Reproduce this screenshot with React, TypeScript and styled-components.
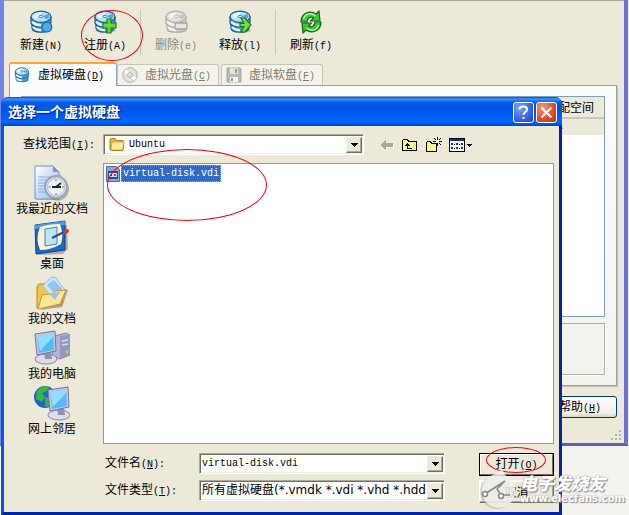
import React, { useState } from "react";
import styled, { createGlobalStyle, css } from "styled-components";

const cjk = `"Noto Sans CJK SC", sans-serif`;
const face = "#ece9d8";

const Global = createGlobalStyle`
  * { box-sizing: border-box; }
  body { margin: 0; background: #f4f3ee; }
  button, input, select { font: inherit; color: inherit; margin: 0; border-radius: 0; }
  svg { display: block; flex: none; }
`;

const Desktop = styled.main`
  position: relative;
  min-height: 515px;
  padding-right: 1px;
  overflow: hidden;
  font: 12px/14px ${cjk};
  color: #000;
`;

/* ---------- text ---------- */
const Latin = styled.span`
  font: 10px/14px "Liberation Mono", monospace;
  white-space: pre;
`;

function Caption({ text, hotkey, underline = true, tail = "" }: {
  text: string; hotkey: string; underline?: boolean; tail?: string;
}) {
  return (
    <span>
      {text}
      <Latin>({underline ? <u>{hotkey}</u> : hotkey}){tail}</Latin>
    </span>
  );
}

const Ring = styled.span<{ $w: number; $h: number; $x: number; $y: number }>`
  position: absolute;
  left: ${p => p.$x}px;
  top: ${p => p.$y}px;
  width: ${p => p.$w}px;
  height: ${p => p.$h}px;
  border: 1px solid #f00010;
  border-radius: 50%;
  pointer-events: none;
  z-index: 2;
`;

/* ---------- media manager window ---------- */
const Manager = styled.section`
  display: flex;
  flex-direction: column;
  border: solid #6f7fe0;
  border-color: #6f7fe0 #6a74d8 #5a5fc8 #7384e4;
  border-width: 0 4px 3px 4px;
  background: ${face};
  box-shadow: inset 0 2px 0 -1px #aca899;
`;

const Toolbar = styled.nav`
  display: flex;
  align-items: flex-start;
  padding: 10px 5px 7px;
`;

const Tool = styled.button`
  position: relative;
  width: 64px;
  height: 45px;
  padding: 0;
  border: 0;
  background: none;
  display: flex;
  flex-direction: column;
  align-items: center;
  gap: 3px;
  white-space: nowrap;
  &:disabled { color: #8b897c; }
`;

const Separator = styled.span`
  width: 1px;
  height: 45px;
  margin: 0 3px;
  background: #c9c6b4;
`;

const TabStrip = styled.div`
  display: flex;
  align-items: flex-end;
  gap: 2px;
  padding-left: 5px;
`;

const Tab = styled.button<{ $active?: boolean }>`
  display: flex;
  align-items: center;
  width: 102px;
  height: 21px;
  padding: 0 0 0 4px;
  gap: 7px;
  white-space: nowrap;
  color: #7d7b70;
  background: #f4f3ea;
  border: 1px solid #c5c4b4;
  border-bottom: 0;
  border-radius: 3px 3px 0 0;
  ${p => p.$active && css`
    width: 108px;
    height: 24px;
    margin: 0 -2px -1px 0;
    gap: 8px;
    color: #000;
    background: #fcfcfe;
    border-color: #91a7b4;
    border-top: 2px solid #fba62c;
    z-index: 1;
  `}
`;

const TabPanel = styled.div`
  margin: 0 7px 0 5px;
  padding: 10px 11px;
  border: 1px solid #91a0a5;
  background: linear-gradient(#fcfcfe, #f4f3ee);
  box-shadow: 1px 1px 1px #c9c6b8;
`;

const Media = styled.table`
  width: 100%;
  height: 221px;
  border: 1px solid #7f9db9;
  border-collapse: separate;
  border-spacing: 0;
  background: #fff;
  th, td { padding: 0; text-align: right; }
  th {
    height: 22px;
    padding-right: 10px;
    font-weight: 400;
    background: #ebeadb;
    border-bottom: 2px solid #cbc7b8;
  }
  td { height: 13px; padding-right: 41px; background: #ece9d8; line-height: 12px; }
  tr:last-child td { height: auto; background: #fff; }
`;

const Details = styled.div`
  height: 52px;
  margin-top: 6px;
  border: 1px solid #b5b1a2;
  background: #f3f2ec;
  box-shadow: 1px 1px 0 #fff;
`;

const Footer = styled.footer`
  display: flex;
  justify-content: flex-end;
  align-items: flex-end;
  padding: 10px 0 0;
`;

const HelpButton = styled.button`
  width: 76px;
  height: 22px;
  margin: 0 -7px 25px 0;
  padding: 0 0 0 2px;
  background: linear-gradient(#fff, #f0efe8 80%, #d9d3c6);
  border: 1px solid #003c74;
  border-radius: 3px;
`;

/* ---------- open-file dialog ---------- */
const Dialog = styled.section`
  position: absolute;
  top: 97px;
  left: 1px;
  right: 67px;
  border: 3px solid #0a41d8;
  border-top: 0;
  border-color: #0a41d8 #0424a8 #0424a8 #0855e0;
  border-radius: 7px 7px 0 0;
  background: ${face};
`;

const TitleBar = styled.header`
  display: flex;
  align-items: center;
  justify-content: flex-end;
  gap: 2px;
  height: 29px;
  margin: 0 -3px;
  padding: 2px 5px 0 7px;
  border-radius: 7px 7px 0 0;
  background: linear-gradient(#0848c0 0, #3d95ff 2px, #0a62ee 5px, #0054e3 9px, #0058ee 17px, #0068ff 24px, #0058e6 27px, #0043c4);
  h1 {
    flex: 1;
    margin: 0;
    padding-bottom: 3px;
    font: bold 14px/20px ${cjk};
    color: #fff;
    text-shadow: 1px 1px 1px #0a1883;
  }
`;

const TitleButton = styled.button<{ $close?: boolean }>`
  width: 21px;
  height: 21px;
  padding: 0;
  border: 1px solid #fff;
  border-radius: 3px;
  color: #fff;
  background: ${p => p.$close
    ? "radial-gradient(circle at 30% 25%, #f09a80, #e0502c 55%, #b83010)"
    : "radial-gradient(circle at 30% 25%, #7ea3f8, #3a68e8 55%, #1d45c0)"};
  display: grid;
  place-items: center;
`;

const Body = styled.div`
  display: grid;
  grid-template-columns: 99px minmax(0, 1fr);
  padding: 8px 5px 9px 0;
`;

const LookLabel = styled.label`
  padding: 2px 0 0 19px;
  white-space: nowrap;
`;

const LookRow = styled.div`
  display: flex;
  align-items: flex-start;
  height: 29px;
`;

const Field = styled.div`
  display: flex;
  align-items: center;
  position: relative;
  flex: 1;
  min-width: 0;
  height: 21px;
  background: #fff;
  border: 1px solid;
  border-color: #aca899 #fff #fff #aca899;
  box-shadow: inset 1px 1px 0 #716f64, inset -1px -1px 0 #f1efe2;
  input, select {
    flex: 1;
    min-width: 0;
    height: 17px;
    padding: 0 20px 0 2px;
    border: 0;
    outline: 0;
    background: none;
    appearance: none;
  }
`;

const LatinInput = styled.input`
  && { font: 10px/14px "Liberation Mono", monospace; }
`;
const LatinSelect = styled.select`
  && { font: 10px/14px "Liberation Mono", monospace; padding-left: 25px; }
`;
const TypeSelect = styled.select`
  && { font: 12px/17px "DejaVu Sans", ${cjk}; padding-right: 17px; }
`;

const DropMark = styled.span`
  position: absolute;
  top: 2px;
  right: 1px;
  width: 16px;
  height: 16px;
  display: grid;
  place-items: center;
  background: ${face};
  border: 1px solid;
  border-color: #f1efe2 #716f64 #716f64 #f1efe2;
  box-shadow: inset -1px -1px 0 #aca899;
  pointer-events: none;
`;

const FieldIcon = styled.span`
  position: absolute;
  left: 5px;
  pointer-events: none;
`;

const IconBar = styled.div`
  display: flex;
  gap: 7px;
  padding: 3px 0 0 16px;
  width: 190px;
`;

const IconButton = styled.button`
  padding: 0;
  border: 0;
  background: none;
`;

const Places = styled.nav`
  display: flex;
  flex-direction: column;
  gap: 5px;
  padding: 2px 3px 0 0;
`;

const Place = styled.button`
  display: flex;
  flex-direction: column;
  align-items: center;
  padding: 0;
  border: 0;
  background: none;
  white-space: nowrap;
  line-height: 14px;
`;

const Files = styled.ul`
  position: relative;
  min-height: 281px;
  margin: 0;
  padding: 1px 2px;
  list-style: none;
  background: #fff;
  border: 1px solid #7f9db9;
`;

const FileItem = styled.button`
  display: flex;
  align-items: center;
  gap: 1px;
  height: 17px;
  padding: 0;
  border: 0;
  background: none;
  color: #fff;
`;

const FileName = styled(Latin)`
  line-height: 15px;
  padding: 0 1px;
  background: #316ac5;
  border: 1px dotted #e8a33c;
`;

const Bottom = styled.div`
  grid-column: 2;
  display: flex;
  align-items: flex-start;
  gap: 34px;
  padding: 9px 0 0 2px;
`;

const Fields = styled.div`
  flex: 1;
  min-width: 0;
  display: grid;
  grid-template-columns: 94px minmax(0, 1fr);
  align-items: center;
  row-gap: 6px;
`;

const Actions = styled.div`
  position: relative;
  width: 75px;
  display: flex;
  flex-direction: column;
  gap: 4px;
`;

const Action = styled.button<{ $primary?: boolean }>`
  height: 23px;
  padding: 0;
  background: ${face};
  border: 1px solid;
  border-color: ${p => (p.$primary ? "#000" : "#fff #716f64 #716f64 #fff")};
  box-shadow: inset -1px -1px 0 ${p => (p.$primary ? "#716f64" : "#aca899")}, inset 1px 1px 0 #fff;
`;

/* ---------- site mark ---------- */
const Mark = styled.div`
  position: absolute;
  right: 4px;
  bottom: 6px;
  display: flex;
  align-items: center;
  gap: 5px;
  color: #fff;
  white-space: nowrap;
  pointer-events: none;
  z-index: 3;
  text-shadow: 1px 1px 1px #8a8a8a, 0 0 2px #999;
  strong { display: block; font: italic 900 17px/20px ${cjk}; }
  span { display: block; font: bold 10px/12px "DejaVu Sans", sans-serif; }
`;

/* ---------- icons ---------- */
function DiskIcon({ size = 24, gray, badge }: { size?: number; gray?: boolean; badge?: "dot" | "plus" | "minus" | "arrow" }) {
  const edge = gray ? "#b0aea6" : "#1d5c8c";
  const side = gray ? "#d3d1ca" : "#4a9fd8";
  const lite = gray ? "#f4f3ef" : "#dff5ff";
  const top = gray ? "#e2e0da" : "#b4e2fa";
  return (
    <svg width={size} height={size} viewBox="0 0 24 24">
      <ellipse cx="13" cy="20.500" rx="10" ry="2.500" fill="#8a8878" opacity=".4" />
      <path d="M3 12v6c0 5.500 18 5.500 18 0v-6z" fill={side} stroke={edge} strokeWidth="1.200" />
      <path d="M4 16.500q2 3.500 8 3.700" stroke={lite} strokeWidth="2.400" fill="none" />
      <path d="M2 7v5.500c0 6 20 6 20 0V7z" fill={side} stroke={edge} strokeWidth="1.200" />
      <path d="M3.500 11.500q2 3.500 8.500 3.800" stroke={lite} strokeWidth="2.600" fill="none" />
      <ellipse cx="12" cy="6.800" rx="10" ry="5.600" fill={top} stroke={edge} strokeWidth="1.200" />
      <path d="M4 6.500Q7 2 13 2.200L10.500 6 6 9z" fill={lite} />
      <path d="M14 6l5.500-2q2.500 3-2 5.500z" fill={gray ? "#c9c7c0" : "#4fa6de"} />
      <ellipse cx="12" cy="6.500" rx="2" ry="1.200" fill={lite} stroke={edge} strokeWidth=".7" />
      {badge === "dot" && <circle cx="18" cy="17" r="4.800" fill="#4fabea" stroke="#1c6fae" strokeWidth="1.200" />}
      {badge === "plus" && <path d="M14 9h4v4h5v5h-5v5h-4v-5h-4v-5h4z" fill="#6cd43c" stroke="#1f7a18" strokeWidth="1.200" />}
      {badge === "minus" && <rect x="11" y="13" width="12" height="6" rx="1" fill="#e8e7e2" stroke="#a5a39b" strokeWidth="1.300" />}
      {badge === "arrow" && <path d="M13 8h4l6 7-6 7h-4l3-5.500h-4v-3h4z" fill="#79dc3f" stroke="#1f7a18" strokeWidth="1.200" />}
    </svg>
  );
}

const RefreshIcon = () => (
  <svg width="24" height="24" viewBox="0 0 24 24">
    <g fill="#42c438" stroke="#12661a" strokeWidth="1.200" strokeLinejoin="round">
      <path d="M2 12C2 3 11 0 17 4l3-3 1 10h-9.500l3-3C11.500 6 8 8 8 12z" />
      <path d="M22 12c0 9-9 12-15 8l-3 3-1-10h9.500l-3 3c3 2 6.500 0 6.500-4z" />
    </g>
    <path d="M4.500 9c1.500-6 8-6.500 12-3M19.500 15c-1.500 6-8 6.500-12 3" stroke="#b4f59a" strokeWidth="1.500" fill="none" />
  </svg>
);

const DiscIcon = () => (
  <svg width="16" height="16" viewBox="0 0 16 16">
    <circle cx="8" cy="8" r="7.300" fill="#e3e2de" stroke="#b3b1aa" />
    <path d="M8 8 3 3.500M8 8l5 4.500" stroke="#fff" strokeWidth="3" />
    <circle cx="8" cy="8" r="2.400" fill="#f6f5ef" stroke="#aaa8a0" />
    <circle cx="8" cy="8" r=".8" fill="#aaa8a0" />
  </svg>
);

const FloppyIcon = () => (
  <svg width="16" height="16" viewBox="0 0 16 16">
    <path d="M1 1h13l1 1v13H1z" fill="#bab9b5" stroke="#a8a69f" />
    <path d="M4 1h8v6H4z" fill="#e6e5e2" />
    <path d="M4 10h8v5H4z" fill="#f5f4f1" />
    <path d="M9 2h2v4H9zM5 11h2v3H5z" fill="#9a9892" />
  </svg>
);

const FolderIcon = () => (
  <svg width="16" height="15" viewBox="0 0 16 15">
    <path d="M1 12V3q0-1.500 1.500-1.500h3.500l1.500 2h6q1 0 1 1V12q0 1.500-1.500 1.500h-10.500Q1 13.500 1 12z" fill="#eab93c" stroke="#a87c14" />
    <path d="M2 12.500 3 6q.2-1 1.200-1H15l-1 7q-.2 1-1.200 1H2.500z" fill="#ffec9c" stroke="#c49a2a" strokeWidth=".8" />
  </svg>
);

const DownIcon = () => (
  <svg width="7" height="4" viewBox="0 0 7 4" shapeRendering="crispEdges"><path d="M0 0h7L3.500 4z" /></svg>
);

const BackIcon = () => (
  <svg width="14" height="16" viewBox="0 0 14 16" shapeRendering="crispEdges">
    <path d="M2 9l5 5v-3h7V8z" fill="#fff" />
    <path d="M0 8l6-5v3h7v4H6v3z" fill="#aca899" />
  </svg>
);

const UpIcon = () => (
  <svg width="17" height="16" viewBox="0 0 17 16" shapeRendering="crispEdges">
    <path d="M1.500 13.500v-10l1-1h4l1 2h8v9z" fill="#fbf58a" stroke="#000" />
    <path d="M6.500 6v5.500H11M4 8.500h5M5 7.500h3" stroke="#000" fill="none" />
  </svg>
);

const NewFolderIcon = () => (
  <svg width="17" height="16" viewBox="0 0 17 16" shapeRendering="crispEdges">
    <path d="M1.500 14.500v-9l1-1h3l1 2h5v8z" fill="#fbf58a" stroke="#000" />
    <path d="M12.500 0v3M12.500 6v3M8 4.500h3M14 4.500h3M9 1l2 2M16 1l-2 2M14 6l2 2" stroke="#000" />
  </svg>
);

const ViewIcon = () => (
  <svg width="24" height="16" viewBox="0 0 24 16" shapeRendering="crispEdges">
    <path d="M.5 1.500h15v13H.5z" fill="#fff" stroke="#000" />
    <path d="M1 2h14v2H1z" fill="#16308c" />
    <path d="M2 6h2v2H2zM7 6h2v2H7zM12 6h2v2h-2zM2 10h2v2H2zM7 10h2v2H7zM12 10h2v2h-2z" fill="#16308c" />
    <path d="M5 7.500h1M10 7.500h1M5 11.500h1M10 11.500h1" stroke="#000" />
    <path d="M18 7h5l-2.500 3z" />
  </svg>
);

const VdiIcon = () => (
  <svg width="14" height="16" viewBox="0 0 14 16">
    <path d="M.5.5h10l3 3v12H.5z" fill="#8ba6cf" stroke="#4a6ca8" />
    <path d="M2 5h10v8H2z" fill="#294c94" />
    <path d="M3 7h8v4H3z" fill="#c6e2fb" />
    <path d="M4 8h2v2H4z" fill="#294c94" />
    <path d="M8 8h2v2H8z" fill="#c73440" />
  </svg>
);

const RecentIcon = () => (
  <svg width="36" height="36" viewBox="0 0 36 36">
    <defs><linearGradient id="pg" x2="1" y2="1"><stop stopColor="#fff" /><stop offset="1" stopColor="#8db9f0" /></linearGradient></defs>
    <path d="M3 35h22l2-2V9z" fill="#8c8a80" opacity=".5" />
    <path d="M1 1h18l6 6v27H1z" fill="url(#pg)" stroke="#6f93cf" />
    <path d="M19 1v6h6z" fill="#6f9be0" />
    <path d="M4 12h14M4 15h12M4 18h8M4 21h7M4 24h7M4 27h8" stroke="#8cb2ea" />
    <circle cx="23.500" cy="24" r="11.500" fill="#77787c" opacity=".5" />
    <circle cx="22" cy="22" r="11" fill="#dfe6ee" stroke="#9aa6b6" strokeWidth="2" />
    <circle cx="22" cy="22" r="8.500" fill="#e9f6fc" stroke="#a6c4dd" />
    <path d="M22 22l5-4M18 22h9" stroke="#15243c" strokeWidth="1.800" />
    <path d="M22 14.500v2M22 28v2M14.500 22h2M28 22h2" stroke="#f08a30" strokeWidth="1.400" />
  </svg>
);

const DeskIcon = () => (
  <svg width="36" height="36" viewBox="0 0 36 36">
    <path d="M3 7l30-2 1 24-5 5-25 1z" fill="#77756c" opacity=".5" />
    <path d="M1 5 31 1v29L2 34z" fill="#1b68c4" stroke="#0b3f8f" />
    <path d="M1 5 31 1v4L1 9z" fill="#4f9de8" />
    <path d="M6 7q9-3 20-3 4 11 1 20-10 6-21 6-5-11 0-23z" fill="#fdf3ce" />
    <path d="M11 9l12-2v17l-12 2z" fill="#bfe2fb" stroke="#3a86cf" />
    <path d="M18 18l12-6" stroke="#1e5398" strokeWidth="2.200" />
    <path d="M31 12l2-1" stroke="#d63b22" strokeWidth="4" strokeLinecap="round" />
  </svg>
);

const DocsIcon = () => (
  <svg width="36" height="36" viewBox="0 0 36 36">
    <path d="M6 35l22-3 6-17-4-1z" fill="#77756c" opacity=".6" />
    <path d="M3 33V12l2-3h6l3 4 14-1v17z" fill="#efc552" stroke="#b98818" />
    <path d="M9 11q1-3 5-5 2-5 6-4 3 0 4 4l7 9-12 9z" fill="#c9e6fb" stroke="#8fbfe8" />
    <path d="M13 10l7-5 8 9-7 5z" fill="#92c4f2" />
    <path d="M4 34 8 20l10-1 4-3 10-1-6 14z" fill="#ffe796" stroke="#c99a28" />
    <path d="M16 20l11-4-6 9z" fill="#8fc4ee" />
  </svg>
);

const Screen = ({ x = 0, y = 0 }: { x?: number; y?: number }) => (
  <g transform={`translate(${x} ${y})`}>
    <ellipse cx="12" cy="29" rx="11" ry="5" fill="#dcdcea" stroke="#8585a8" />
    <path d="M10 22h7l1 7h-7z" fill="#8f90b4" />
    <path d="M1 4 21 1l1 20-19 4z" fill="#c8c8dd" stroke="#7474a0" />
    <path d="M3 6l16-3 1 17-15 3z" fill="#54b9f6" />
    <path d="M3 6l16-3v4L6 21z" fill="#94dcff" />
  </g>
);

const ComputerIcon = () => (
  <svg width="36" height="36" viewBox="0 0 36 36">
    <path d="M20 6l12-3 4 2v20l-10 4-8-3z" fill="#b3b4d4" stroke="#8485ae" />
    <path d="M26 6l9-1v20l-9 3z" fill="#9596c2" />
    <path d="M28 11l6-1M28 15l6-1" stroke="#dcdcf0" strokeWidth="1.500" />
    <circle cx="33" cy="22" r="1.400" fill="#8bf046" />
    <Screen />
  </svg>
);

const NetworkIcon = () => (
  <svg width="36" height="36" viewBox="0 0 36 36">
    <circle cx="11" cy="12" r="11" fill="#1f63cd" />
    <path d="M3 6q6-7 12-4l-2 4-5 2 3 4-3 5-6-3zM11 12l5 1-1 8-4 1z" fill="#3cb53c" />
    <Screen x={13} y={1} />
  </svg>
);

const tools = [
  { text: "新建", key: "N", icon: <DiskIcon badge="dot" /> },
  { text: "注册", key: "A", icon: <DiskIcon badge="plus" />, ring: true },
  { text: "删除", key: "e", icon: <DiskIcon gray badge="minus" />, off: true, before: true },
  { text: "释放", key: "l", icon: <DiskIcon badge="arrow" /> },
  { text: "刷新", key: "f", icon: <RefreshIcon />, before: true },
];

const tabs = [
  { text: "虚拟硬盘", key: "D", icon: <DiskIcon size={16} /> },
  { text: "虚拟光盘", key: "C", icon: <DiscIcon /> },
  { text: "虚拟软盘", key: "F", icon: <FloppyIcon /> },
];

const places = [
  { text: "我最近的文档", icon: <RecentIcon /> },
  { text: "桌面", icon: <DeskIcon /> },
  { text: "我的文档", icon: <DocsIcon /> },
  { text: "我的电脑", icon: <ComputerIcon /> },
  { text: "网上邻居", icon: <NetworkIcon /> },
];

export default function App() {
  const [name, setName] = useState("virtual-disk.vdi");
  return (
    <>
      <Global />
      <Desktop>
        <Manager>
          <Toolbar>
            {tools.map(t => (
              <React.Fragment key={t.text}>
                {t.before && <Separator />}
                <Tool disabled={t.off}>
                  {t.icon}
                  <Caption text={t.text} hotkey={t.key} underline={false} />
                  {t.ring && <Ring $w={62} $h={51} $x={8} $y={0} />}
                </Tool>
              </React.Fragment>
            ))}
          </Toolbar>
          <TabStrip role="tablist">
            {tabs.map((t, i) => (
              <Tab key={t.key} role="tab" aria-selected={i === 0} $active={i === 0}>
                {t.icon}
                <Caption text={t.text} hotkey={t.key} />
              </Tab>
            ))}
          </TabStrip>
          <TabPanel>
            <Media>
              <thead><tr><th>配空间</th></tr></thead>
              <tbody>
                <tr><td><Latin>s</Latin></td></tr>
                <tr><td /></tr>
              </tbody>
            </Media>
            <Details />
          </TabPanel>
          <Footer>
            <HelpButton><Caption text="帮助" hotkey="H" /></HelpButton>
            <svg width="14" height="14" viewBox="0 0 14 14" shapeRendering="crispEdges">
              <path d="M9 1h2v2H9zM5 5h2v2H5zM9 5h2v2H9zM1 9h2v2H1zM5 9h2v2H5zM9 9h2v2H9z" fill="#b8b4a2" />
            </svg>
          </Footer>
        </Manager>

        <Dialog role="dialog" aria-labelledby="dialog-title">
          <TitleBar>
            <h1 id="dialog-title">选择一个虚拟硬盘</h1>
            <TitleButton aria-label="帮助">
              <svg width="13" height="15" viewBox="0 0 13 15" fill="none" stroke="#fff" strokeWidth="2">
                <path d="M2.500 4.500C2.500.5 10 .5 10 4.500 10 7 6.500 7 6.500 10M6.500 12v2" />
              </svg>
            </TitleButton>
            <TitleButton $close aria-label="关闭">
              <svg width="13" height="13" viewBox="0 0 13 13" stroke="#fff" strokeWidth="2.200"><path d="M1.500 1.500l10 10M11.500 1.500l-10 10" /></svg>
            </TitleButton>
          </TitleBar>
          <Body>
            <LookLabel htmlFor="look"><Caption text="查找范围" hotkey="I" tail=":" /></LookLabel>
            <LookRow>
              <Field>
                <FieldIcon><FolderIcon /></FieldIcon>
                <LatinSelect id="look"><option>Ubuntu</option></LatinSelect>
                <DropMark><DownIcon /></DropMark>
              </Field>
              <IconBar>
                <IconButton aria-label="后退"><BackIcon /></IconButton>
                <IconButton aria-label="向上"><UpIcon /></IconButton>
                <IconButton aria-label="新建文件夹"><NewFolderIcon /></IconButton>
                <IconButton aria-label="查看"><ViewIcon /></IconButton>
              </IconBar>
            </LookRow>
            <Places>
              {places.map(p => <Place key={p.text}>{p.icon}{p.text}</Place>)}
            </Places>
            <Files>
              <li><FileItem><VdiIcon /><FileName>virtual-disk.vdi</FileName></FileItem></li>
              <Ring as="li" aria-hidden $w={160} $h={72} $x={3} $y={-15} />
            </Files>
            <Bottom>
              <Fields>
                <label htmlFor="name"><Caption text="文件名" hotkey="N" tail=":" /></label>
                <Field>
                  <LatinInput id="name" value={name} onChange={e => setName(e.target.value)} />
                  <DropMark><DownIcon /></DropMark>
                </Field>
                <label htmlFor="type"><Caption text="文件类型" hotkey="T" tail=":" /></label>
                <Field>
                  <TypeSelect id="type"><option>所有虚拟硬盘(*.vmdk *.vdi *.vhd *.hdd</option></TypeSelect>
                  <DropMark><DownIcon /></DropMark>
                </Field>
              </Fields>
              <Actions>
                <Action $primary><Caption text="打开" hotkey="O" /></Action>
                <Action>取消</Action>
                <Ring $w={60} $h={26} $x={7} $y={-6} />
              </Actions>
            </Bottom>
          </Body>
        </Dialog>

        <Mark>
          <svg width="37" height="40" viewBox="0 0 37 40">
            <circle cx="19" cy="23" r="17" fill="#aaa8a0" opacity=".5" />
            <path d="M18 5 24 0l3 6a17 17 0 1 1-9-1z" fill="#f6f5f0" opacity=".8" />
            <path d="M7 25 27 12M27 12l-8 8 4 6h9" fill="none" stroke="#8b8984" strokeWidth="1.500" />
            <circle cx="7" cy="25" r="2.500" fill="#fff" stroke="#8b8984" strokeWidth="1.500" />
            <circle cx="23" cy="27" r="2.500" fill="#fff" stroke="#8b8984" strokeWidth="1.500" />
          </svg>
          <div><strong>电子发烧友</strong><span>www.elecfans.com</span></div>
        </Mark>
      </Desktop>
    </>
  );
}
